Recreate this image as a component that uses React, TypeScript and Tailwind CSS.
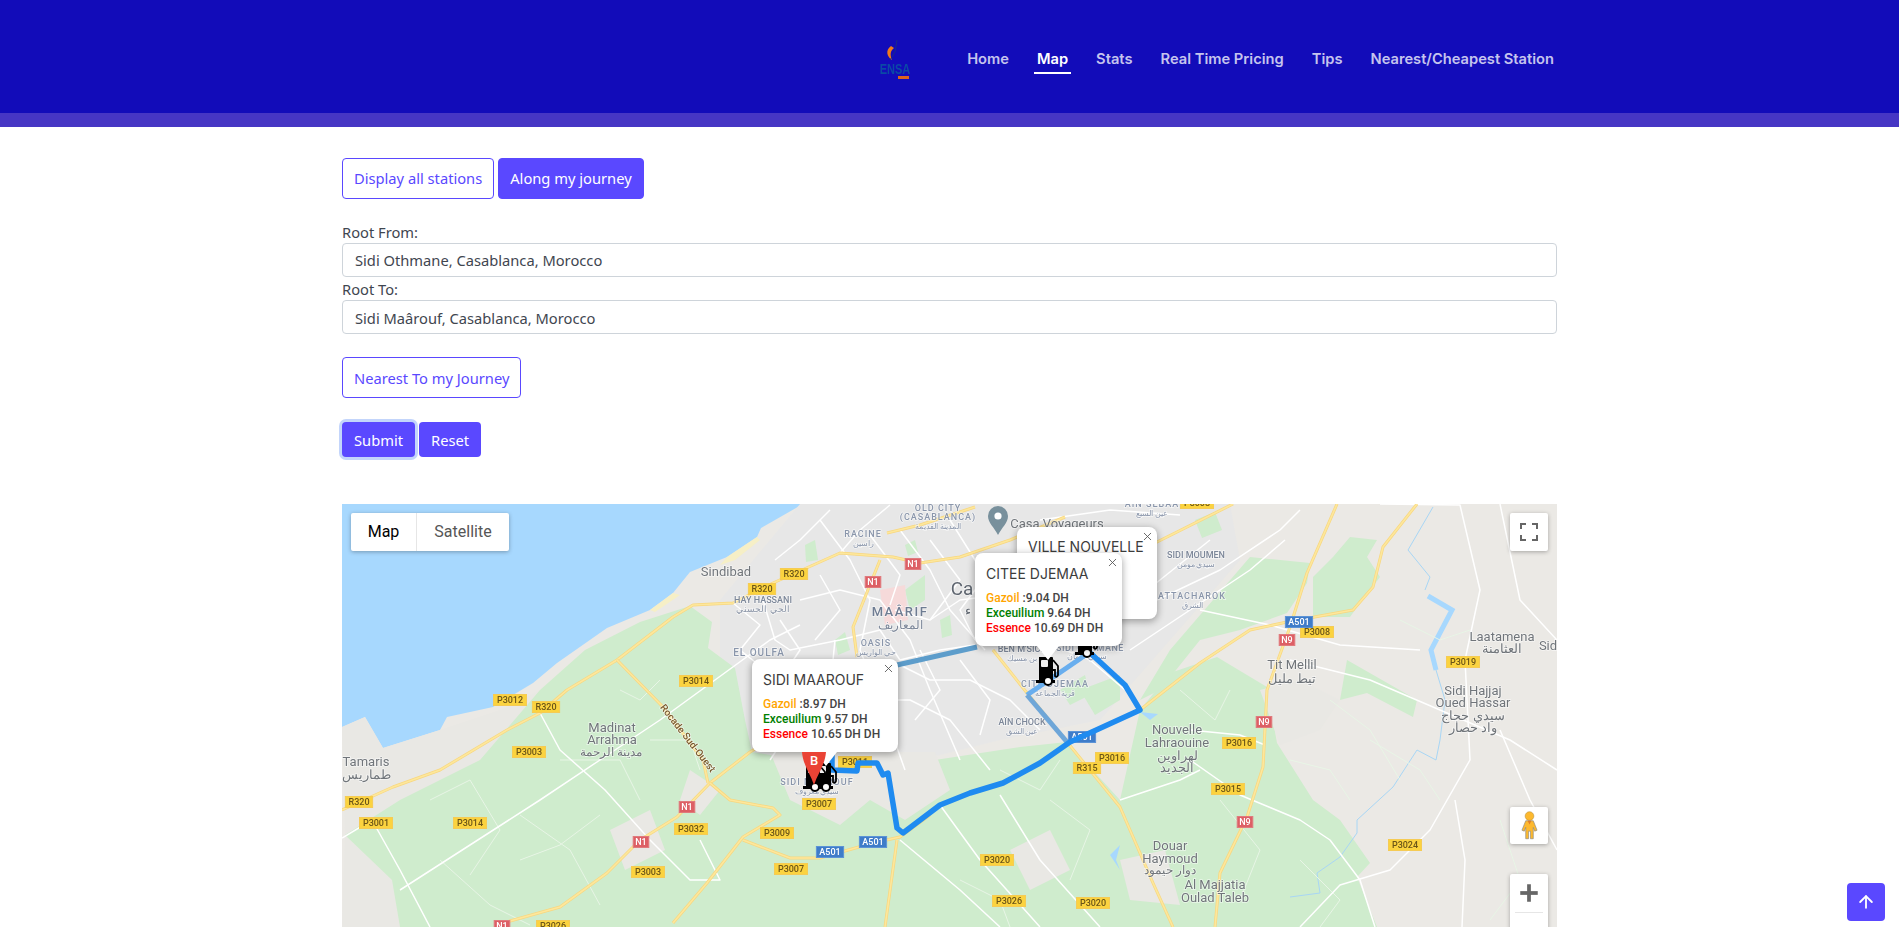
import { ArrowUp, Plus, X } from "lucide-react";

const navItems = ["Home", "Map", "Stats", "Real Time Pricing", "Tips", "Nearest/Cheapest Station"];

const greens = [
  "540,690 585,650 640,622 690,606 712,622 708,648 735,668 745,720 752,752 800,760 905,770 935,760 1020,747 1067,742 1120,800 1140,710 1170,673 1217,657 1267,687 1277,743 1313,800 1340,820 1370,863 1357,877 1377,927 400,927 392,880 345,835 400,800 480,760",
  "1250,557 1310,563 1307,583 1287,613 1240,630 1200,640 1160,690 1140,700 1170,650",
  "1350,537 1377,540 1367,557 1380,577 1360,603 1350,617 1313,617 1313,577 1333,557",
  "1347,660 1417,700 1413,717 1367,693 1340,700",
  "905,590 925,575 925,600 910,610",
  "1080,690 1120,675 1120,700 1095,715",
  "905,545 915,540 918,552 908,556",
  "835,640 845,632 850,650 838,655",
  "940,620 950,615 952,635 942,638",
  "1060,690 1085,675 1090,695 1070,705",
  "1195,520 1215,512 1222,530 1202,538",
  "805,545 815,540 818,560 806,562",
];

const greys = [
  "342,727 365,717 383,748 440,730 500,710 540,690 480,760 400,800 345,835",
  "500,745 560,700 590,745 545,775 515,790",
  "392,880 345,835 342,927 400,927",
  "770,752 935,752 950,790 905,820 870,800 840,825 790,800",
  "610,830 650,810 665,850 625,870",
  "690,770 720,790 700,815 680,800",
  "1010,850 1050,830 1070,870 1030,890",
  "1120,860 1165,850 1180,905 1130,900",
  "1260,690 1300,680 1340,700 1320,730 1280,745",
];

const yellowRoads = [
  "342,810 393,787 440,770 507,730 540,713 567,690 617,660 673,617 693,605 733,603 773,583 840,553 893,557 920,563 960,557 1010,540 1065,517",
  "503,923 560,907 607,873 640,840 677,817 710,783 750,752 795,725",
  "710,783 730,800 773,808 780,815 743,837 707,883 673,923",
  "743,840 790,858 820,858 873,843 900,837 930,815",
  "897,840 885,927",
  "617,660 663,707 703,760 708,783",
  "880,560 853,627 857,657",
  "887,533 920,525 975,507",
  "1067,742 1140,710 1200,663 1250,630 1287,622 1353,610 1373,587 1383,547 1417,504",
  "1337,504 1307,573 1290,627 1267,690 1263,767 1247,817 1220,873 1215,927",
  "993,650 1027,693 1067,742 1120,807 1153,883 1173,927",
  "1233,504 1157,542 1120,560",
  "795,725 842,690 855,660",
];

const whiteRoads = [
  "342,838 372,820 400,870 430,927",
  "400,890 470,845 540,800 600,760 660,720 715,680 770,640 800,625",
  "540,713 560,750 605,790 650,840 690,880 720,880 700,840",
  "763,600 775,640 790,650 840,640 880,630 900,660 940,650 975,645",
  "733,603 760,625 740,650 790,690 800,725",
  "800,600 840,590 880,600 910,640 930,690 960,760",
  "775,560 800,540 830,510",
  "820,520 850,560 870,600 860,650 880,700 905,770",
  "840,553 860,530 890,505",
  "900,530 930,570 950,610 985,650",
  "950,520 975,560 1010,600 1040,640 1090,660 1125,690",
  "895,610 930,620 960,600 1000,595",
  "890,660 930,680 970,680 1010,700 1040,730",
  "870,700 910,700 950,720 990,770",
  "1157,600 1220,570 1280,530 1300,510",
  "1130,650 1190,610 1250,570 1285,540",
  "1200,610 1270,625 1340,645 1420,650",
  "1290,660 1370,680 1440,710 1510,740 1557,770",
  "1380,504 1460,505 1480,590 1465,660 1470,760 1430,830 1390,870 1340,885 1300,927",
  "1455,800 1465,860 1462,927",
  "1500,504 1520,600 1557,640",
  "1500,730 1530,800 1557,850",
  "1190,760 1240,795 1300,820 1330,840 1360,880 1375,927",
  "1190,730 1240,735 1265,745",
  "1000,795 1040,860 1100,927",
  "940,805 980,860 1040,927",
  "900,840 960,890 1000,927",
  "1120,800 1180,780 1200,770",
  "1040,520 1110,510 1180,515",
  "1085,650 1110,620 1160,580 1210,540",
  "780,620 800,650 780,680",
  "835,640 830,690",
  "760,690 790,730 770,760",
  "820,575 840,610 815,640",
  "870,535 900,575 890,605",
  "930,540 960,580 930,620",
  "990,570 960,610 975,640",
  "1000,600 1050,570 1100,545",
  "920,650 940,690 915,720",
  "960,660 990,700 980,735",
];

const tracks = [
  "430,800 470,780 500,830 470,875",
  "520,815 570,850 600,905",
  "560,760 620,760 640,800",
  "600,815 560,845 520,860",
  "440,860 490,905 530,925",
  "650,740 690,740 700,770",
  "660,680 640,700 620,690",
  "1000,770 1040,790 1060,760",
  "1050,800 1090,830 1070,880",
  "960,880 1000,900 1010,927",
  "1230,690 1215,720 1180,690",
  "1290,760 1330,770 1350,800",
  "1300,860 1340,900 1320,927",
  "1400,620 1440,640 1470,630",
  "1370,740 1420,770 1440,800",
  "1500,820 1520,880 1490,920",
  "1330,700 1370,730 1400,780",
  "1220,800 1260,850 1240,900",
];

const shields: [number, number, string, string][] = [
  [794, 574, "R320", "y"], [762, 589, "R320", "y"], [696, 681, "P3014", "y"], [510, 700, "P3012", "y"],
  [546, 707, "R320", "y"], [529, 752, "P3003", "y"], [359, 802, "R320", "y"], [376, 823, "P3001", "y"],
  [470, 823, "P3014", "y"], [691, 829, "P3032", "y"], [648, 872, "P3003", "y"], [777, 833, "P3009", "y"],
  [819, 804, "P3007", "y"], [791, 869, "P3007", "y"], [553, 926, "P3026", "y"], [855, 762, "P3011", "y"],
  [1112, 758, "P3016", "y"], [1087, 768, "R315", "y"], [997, 860, "P3020", "y"], [1009, 901, "P3026", "y"],
  [1093, 903, "P3020", "y"], [1317, 632, "P3008", "y"], [1463, 662, "P3019", "y"], [1239, 743, "P3016", "y"],
  [1228, 789, "P3015", "y"], [1405, 845, "P3024", "y"], [1197, 503, "P3008", "y"],
  [687, 807, "N1", "r"], [641, 842, "N1", "r"], [502, 926, "N1", "r"], [913, 564, "N1", "r"], [873, 582, "N1", "r"],
  [1287, 640, "N9", "r"], [1264, 722, "N9", "r"], [1245, 822, "N9", "r"],
  [830, 852, "A501", "b"], [873, 842, "A501", "b"], [1082, 737, "A501", "b"], [1299, 622, "A501", "b"],
];

// x, y, text, size, colour, weight, letter spacing
const labels: [number, number, string, number, string, number, number][] = [
  [726, 571, "Sindibad", 13, "#70757a", 400, 0],
  [763, 600, "HAY HASSANI", 9, "#7c8799", 500, 0],
  [763, 609, "الحي الحسني", 9, "#8a94a6", 400, 0],
  [759, 652, "EL OULFA", 10, "#8a96ab", 500, 1],
  [612, 727, "Madinat", 13, "#70757a", 400, 0],
  [612, 739, "Arrahma", 13, "#70757a", 400, 0],
  [611, 752, "مدينة الرحمة", 12, "#70757a", 400, 0],
  [366, 761, "Tamaris", 13, "#70757a", 400, 0],
  [366, 774, "طماريس", 13, "#70757a", 400, 0],
  [938, 508, "OLD CITY", 9, "#8a96ab", 500, 1],
  [938, 517, "(CASABLANCA)", 9, "#8a96ab", 500, 1],
  [938, 526, "المدينة القديمة", 8, "#8a96ab", 400, 0],
  [863, 534, "RACINE", 9, "#8a96ab", 500, 1],
  [863, 543, "راسين", 8, "#8a96ab", 400, 0],
  [962, 588, "Ca", 19, "#5f6670", 400, 0],
  [968, 610, "ء", 13, "#5f6670", 400, 0],
  [900, 611, "MAÂRIF", 13, "#6e7c92", 500, 1.5],
  [900, 625, "المعاريف", 12, "#7c8799", 400, 0],
  [876, 643, "OASIS", 9, "#8a96ab", 500, 1],
  [876, 652, "حي الواريس", 8, "#8a96ab", 400, 0],
  [1022, 649, "BEN M'SICK", 9, "#7c8799", 500, 0],
  [1022, 658, "بن مسيك", 8, "#8a96ab", 400, 0],
  [1090, 648, "SIDI OTHMANE", 9, "#8a96ab", 500, 0.5],
  [1087, 656, "سيدي عثمان", 8, "#8a96ab", 400, 0],
  [1055, 684, "CITÉ DJEMAA", 9, "#8a96ab", 500, 1],
  [1055, 693, "قرية الجماعة", 8, "#8a96ab", 400, 0],
  [1022, 722, "AÏN CHOCK", 9, "#7c8799", 500, 0],
  [1022, 731, "عين الشق", 8, "#8a96ab", 400, 0],
  [817, 782, "SIDI MAAROUF", 9, "#8a96ab", 500, 1],
  [817, 791, "سيدي معروف", 8, "#8a96ab", 400, 0],
  [1177, 729, "Nouvelle", 13, "#70757a", 400, 0],
  [1177, 742, "Lahraouine", 13, "#70757a", 400, 0],
  [1177, 755, "لهراوين", 13, "#70757a", 400, 0],
  [1177, 767, "الجديد", 13, "#70757a", 400, 0],
  [1170, 845, "Douar", 13, "#70757a", 400, 0],
  [1170, 858, "Haymoud", 13, "#70757a", 400, 0],
  [1170, 870, "دوار حيمود", 12, "#70757a", 400, 0],
  [1215, 884, "Al Majjatia", 13, "#70757a", 400, 0],
  [1215, 897, "Oulad Taleb", 13, "#70757a", 400, 0],
  [1057, 523, "Casa Voyageurs", 13, "#70757a", 400, 0],
  [1196, 555, "SIDI MOUMEN", 9, "#7c8799", 500, 0],
  [1196, 564, "سيدي مومن", 8, "#8a96ab", 400, 0],
  [1192, 596, "ATTACHAROK", 9, "#8a96ab", 500, 1],
  [1192, 605, "الشرق", 8, "#8a96ab", 400, 0],
  [1292, 664, "Tit Mellil", 13, "#70757a", 400, 0],
  [1292, 678, "تيط مليل", 13, "#70757a", 400, 0],
  [1502, 636, "Laatamena", 13, "#70757a", 400, 0],
  [1502, 648, "العثامنة", 13, "#70757a", 400, 0],
  [1473, 690, "Sidi Hajjaj", 13, "#70757a", 400, 0],
  [1473, 702, "Oued Hassar", 13, "#70757a", 400, 0],
  [1473, 715, "سيدي حجاج", 13, "#70757a", 400, 0],
  [1473, 727, "واد حصار", 13, "#70757a", 400, 0],
  [1548, 645, "Sid", 13, "#70757a", 400, 0],
  [1152, 504, "AIN SEBAA", 9, "#8a96ab", 500, 1],
  [1152, 513, "عين السبع", 8, "#8a96ab", 400, 0],
];

const shieldStyles: Record<string, { fill: string; stroke: string; text: string }> = {
  y: { fill: "#fbd33f", stroke: "#f5cb55", text: "#6b5518" },
  r: { fill: "#dd5f65", stroke: "#e07a7d", text: "#ffffff" },
  b: { fill: "#3f7cc9", stroke: "#5c93d6", text: "#ffffff" },
};

function Pump({ x, y }: { x: number; y: number }) {
  return (
    <g transform={`translate(${x} ${y})`}>
      <path d="M-9 -24 h13 a1 1 0 0 1 1 1 v22 h2 v3 h-19 v-3 h3 z" fill="#000" />
      <rect x={-7} y={-21} width={7} height={7} rx={1} fill="#eee" />
      <path d="M5 -21 L10 -15 V-6 Q9 -3 7 -5 V-11 H5" fill="none" stroke="#000" strokeWidth={1.8} />
      <circle r={4} fill="#fff" stroke="#000" strokeWidth={2} />
    </g>
  );
}

function MapArt() {
  return (
    <svg
      viewBox="342 504 1215 423"
      className="absolute inset-0 h-[423px] w-[1215px] blur-[0.35px] font-['Roboto',sans-serif]"
    >
      <rect x={342} y={504} width={1215} height={423} fill="#ebe9e5" />
      <polygon
        points="342,504 803,504 761,528 757,537 727,557 690,572 673,593 650,610 607,628 557,663 533,683 493,707 447,717 440,730 383,748 365,717 342,727"
        fill="#a7d8fe"
      />
      <polygon points="800,504 1230,504 1240,560 1170,640 1100,720 1000,740 880,770 780,790 720,700 720,600" fill="#e7e7e7" />
      {greys.slice(0, 3).map((p) => (
        <polygon key={p} points={p} fill="#e9e8e4" />
      ))}
      {greens.map((p) => (
        <polygon key={p} points={p} fill="#cfeccd" />
      ))}
      {greys.slice(3).map((p) => (
        <polygon key={p} points={p} fill="#e9e8e4" />
      ))}
      <polygon points="757,537 727,557 720,565 735,560 760,540" fill="#f6efc6" />
      <polygon points="673,593 650,610 655,612 680,595" fill="#f6efc6" />
      <polygon points="880,590 905,585 908,620 885,625" fill="#f6dada" />
      <polyline points="1433,507 1408,550 1430,577 1425,590" fill="none" stroke="#a8d6f5" strokeWidth={1} />
      <polyline points="1428,596 1452,610 1431,650 1436,670" fill="none" stroke="#a7d8fe" strokeWidth={5} />
      <polyline points="1436,670 1445,700 1440,740 1436,760 1417,750 1393,787 1357,820 1357,833 1340,857 1317,873 1320,893 1290,897" fill="none" stroke="#a8d6f5" strokeWidth={1} />
      <polygon points="1140,712 1158,714 1150,720" fill="#a7d8fe" />
      <polygon points="1110,855 1120,845 1116,860 1120,870" fill="#a7d8fe" />
      {tracks.map((p) => (
        <polyline key={p} points={p} fill="none" stroke="#e8f5e6" strokeWidth={1} />
      ))}
      {whiteRoads.map((p) => (
        <polyline key={p} points={p} fill="none" stroke="#fff" strokeWidth={1.5} strokeLinejoin="round" />
      ))}
      {yellowRoads.map((p) => (
        <g key={p}>
          <polyline points={p} fill="none" stroke="#f8d77f" strokeWidth={3} strokeLinejoin="round" />
          <polyline points={p} fill="none" stroke="#fde79c" strokeWidth={1.6} strokeLinejoin="round" />
        </g>
      ))}
      {labels.map(([x, y, text, size, fill, weight, spacing]) => (
        <text
          key={text + x}
          x={x}
          y={y}
          fontSize={size}
          fontWeight={weight}
          fill={fill}
          letterSpacing={spacing}
          textAnchor="middle"
          dominantBaseline="central"
          stroke="#ffffff"
          strokeOpacity={0.6}
          strokeWidth={1.5}
          paintOrder="stroke"
        >
          {text}
        </text>
      ))}
      <text
        x={688}
        y={738}
        fontSize={10}
        fontWeight={500}
        fill="#7a5a2e"
        textAnchor="middle"
        dominantBaseline="central"
        transform="rotate(52 688 738)"
        stroke="#ffffff"
        strokeOpacity={0.6}
        strokeWidth={1.5}
        paintOrder="stroke"
      >
        Rocade Sud-Ouest
      </text>
      {shields.map(([x, y, text, kind]) => {
        const s = shieldStyles[kind];
        const w = text.length * 5.8 + 4;
        return (
          <g key={text + x}>
            <rect x={x - w / 2} y={y - 5.5} width={w} height={11} fill={s.fill} stroke={s.stroke} strokeWidth={1} />
            <text x={x} y={y} fontSize={9} fontWeight={500} fill={s.text} textAnchor="middle" dominantBaseline="central">
              {text}
            </text>
          </g>
        );
      })}
      <path
        d="M998 535 C994 527 988 523 988 516 A10 10 0 0 1 1008 516 C1008 523 1002 527 998 535 Z"
        fill="#78909c"
      />
      <circle cx={998} cy={516} r={3.6} fill="#fff" />
      {/* route */}
      <polyline points="897,665 977,647" fill="none" stroke="#5d9dcb" strokeWidth={5} />
      <polyline points="1087,654 1027,695" fill="none" stroke="#69aeee" strokeWidth={5} />
      <polyline points="1027,695 1067,742" fill="none" stroke="#6ea6d8" strokeWidth={5} strokeLinejoin="round" />
      <polyline
        points="832,751 832,770 857,771 858,763 877,763 883,775 888,773 897,828 903,833 940,805 970,793 1003,783 1040,763 1070,742 1140,710 1125,685 1087,650"
        fill="none"
        stroke="#1f8bf0"
        strokeWidth={5.5}
        strokeLinejoin="round"
      />
      <Pump x={1087} y={653} />
      <Pump x={1048} y={681} />
      <Pump x={826} y={787} />
      <Pump x={815} y={787} />
    </svg>
  );
}

function Popup({
  title,
  gazoil,
  exceuilium,
  essence,
  className,
  pointer,
}: {
  title: string;
  gazoil?: string;
  exceuilium?: string;
  essence?: string;
  className: string;
  pointer: string;
}) {
  return (
    <div className={`absolute rounded-[8px] bg-white pl-[11px] pt-[10px] shadow-[0_2px_7px_1px_rgba(0,0,0,0.3)] ${className}`}>
      <div className={`text-[14px] leading-[20px] text-[#3c3c3c] font-['Inter',sans-serif] ${gazoil ? "mt-[1px]" : ""}`}>{title}</div>
      {gazoil && (
        <div className="mt-[7px] text-[12px] leading-[15px] font-medium text-[#444] font-['Roboto',sans-serif]">
          <div>
            <span className="text-[#ffa500]">Gazoil</span> :{gazoil} DH
          </div>
          <div>
            <span className="text-[#008000]">Exceuilium</span> {exceuilium} DH
          </div>
          <div>
            <span className="text-[#ff0000]">Essence</span> {essence} DH DH
          </div>
        </div>
      )}
      <X className="absolute right-[3px] top-[3px] size-[13px] text-[#555]" strokeWidth={1.6} />
      <div className={`absolute top-full h-0 w-0 border-x-[11px] border-t-[14px] border-x-transparent border-t-white ${pointer}`} />
    </div>
  );
}

export default function App() {
  return (
    <div className="h-[927px] overflow-hidden bg-white font-['Noto_Sans',sans-serif]">
      <header className="flex h-[113px] justify-center bg-[#120cb9]">
        <div className="flex w-[1215px] items-start justify-end pr-[3px]">
          <svg viewBox="0 0 30 42" className="mr-[57px] mt-[40px] h-[42px] w-[30px] blur-[0.6px]">
            <path d="M11 6 C5 10 7 17 12 20 C10 15 10 11 14 8 Z" fill="#f07a1c" />
            <path d="M17 0 L15 12 L10 20" fill="none" stroke="#1c2a8a" strokeWidth={1} />
            <text
              x={0}
              y={0}
              fontSize={11}
              fontWeight={700}
              fill="#0b4aa6"
              textAnchor="middle"
              fontFamily="Liberation Sans"
              transform="translate(15 34) scale(1 1.4)"
            >
              ENSA
            </text>
            <rect x={18} y={36} width={11} height={3} fill="#d9641e" />
          </svg>
          <nav className="mt-[49px] flex gap-[28px] text-[14.7px] leading-[20px] font-semibold text-[#c5c4ee] font-['Inter',sans-serif]">
            {navItems.map((item) =>
              item === "Map" ? (
                <span key={item} className="border-b-2 border-white px-[3px] pb-[3px] -mx-[3px] text-white">
                  {item}
                </span>
              ) : (
                <span key={item}>{item}</span>
              ),
            )}
          </nav>
        </div>
      </header>
      <div className="h-[14px] bg-[#4636c4]" />

      <main className="mx-auto w-[1215px] pt-[31px] text-[14.7px] text-[#3f4650]">
        <div className="flex gap-[4px]">
          <button className="h-[41px] rounded-[4px] border border-[#5a48ff] px-[11px] text-[#5a48ff]">Display all stations</button>
          <button className="h-[41px] rounded-[4px] border border-[#5a48ff] bg-[#5a48ff] px-[11px] text-white">Along my journey</button>
        </div>

        <label className="mt-[21px] block h-[23px] pt-[1px] leading-[23px]">Root From:</label>
        <div className="flex h-[34px] items-center rounded-[4px] border border-[#ced4da] px-[12px] pt-[1px]">Sidi Othmane, Casablanca, Morocco</div>
        <label className="block h-[23px] pt-[1px] leading-[23px]">Root To:</label>
        <div className="flex h-[34px] items-center rounded-[4px] border border-[#ced4da] px-[12px] pt-[2px]">Sidi Maârouf, Casablanca, Morocco</div>

        <button className="mt-[23px] block h-[41px] rounded-[4px] border border-[#5a48ff] px-[11px] pt-[1px] text-[#5a48ff]">Nearest To my Journey</button>

        <div className="mt-[24px] flex items-center gap-[4px]">
          <button className="h-[35px] rounded-[4px] bg-[#5a48ff] px-[12px] pt-[1px] text-white shadow-[0_0_0_3px_#c3d5fb]">Submit</button>
          <button className="h-[35px] rounded-[4px] bg-[#5a48ff] px-[12px] pt-[1px] text-white">Reset</button>
        </div>

        <div className="relative mt-[47px] h-[423px] overflow-hidden">
          <MapArt />
          <Popup
            title="VILLE NOUVELLE"
            className="left-[675px] top-[23px] h-[92px] w-[140px]"
            pointer="left-[60px]"
          />
          <Popup
            title="CITEE DJEMAA"
            gazoil="9.04"
            exceuilium="9.64"
            essence="10.69"
            className="left-[633px] top-[49px] h-[93px] w-[147px]"
            pointer="left-[62px]"
          />
          <Popup
            title="SIDI MAAROUF"
            gazoil="8.97"
            exceuilium="9.57"
            essence="10.65"
            className="left-[410px] top-[155px] h-[93px] w-[146px]"
            pointer="left-[63px]"
          />
          {/* the B pin sits over the popup's pointer, its head cut by the popup */}
          <svg viewBox="0 0 30 34" className="absolute left-[459px] top-[248px] h-[34px] w-[30px] font-['Roboto',sans-serif]">
            <path d="M13 33 C9 21 2 13 1 0 H25 C24 13 17 21 13 33 Z" fill="#ea4335" />
            <text x={13} y={8} fontSize={13} fontWeight={500} fill="#fff" textAnchor="middle" dominantBaseline="central">
              B
            </text>
          </svg>

          <div className="absolute left-[9px] top-[9px] flex h-[38px] items-center rounded-[2px] bg-white text-[16px] shadow-[0_1px_4px_rgba(0,0,0,0.3)] font-['Roboto',sans-serif]">
            <span className="flex h-full w-[66px] items-center justify-center border-r border-[#e6e6e6] text-black">Map</span>
            <span className="flex h-full w-[92px] items-center justify-center text-[#565656]">Satellite</span>
          </div>
          <div className="absolute left-[1168px] top-[9px] flex size-[38px] items-center justify-center rounded-[2px] bg-white shadow-[0_1px_4px_rgba(0,0,0,0.3)]">
            <svg viewBox="0 0 18 18" className="size-[18px]">
              <path d="M1 6V1H6M12 1H17V6M17 12V17H12M6 17H1V12" fill="none" stroke="#666" strokeWidth={2} />
            </svg>
          </div>
          <div className="absolute left-[1168px] top-[303px] flex h-[37px] w-[38px] items-center justify-center rounded-[2px] bg-white shadow-[0_1px_4px_rgba(0,0,0,0.3)]">
            <svg viewBox="0 0 18 30" className="h-[29px] w-[17px]">
              <circle cx={9} cy={5} r={4.6} fill="#fdb92e" stroke="#b98f3a" strokeWidth={0.6} />
              <path d="M5 10 H13 L17 20 L14.5 21 L13 17 V29 H10 V21 H8 V29 H5 V17 L3.5 21 L1 20 Z" fill="#fdb92e" stroke="#8f8a80" strokeWidth={0.7} />
              <path d="M7 10 H11 L9 14 Z" fill="#e07b2a" />
            </svg>
          </div>
          <div className="absolute left-[1168px] top-[370px] flex h-[77px] w-[38px] flex-col items-center rounded-[2px] bg-white shadow-[0_1px_4px_rgba(0,0,0,0.3)]">
            <div className="flex h-[38px] items-center justify-center">
              <Plus className="size-[30px] text-[#666]" strokeWidth={3} strokeLinecap="butt" />
            </div>
            <div className="h-px w-[28px] bg-[#e6e6e6]" />
          </div>
        </div>
      </main>

      <button className="fixed left-[1847px] top-[883px] flex size-[38px] items-center justify-center rounded-[4px] bg-[#5a48ff] text-white">
        <ArrowUp className="size-[20px]" strokeWidth={2.2} />
      </button>
    </div>
  );
}
